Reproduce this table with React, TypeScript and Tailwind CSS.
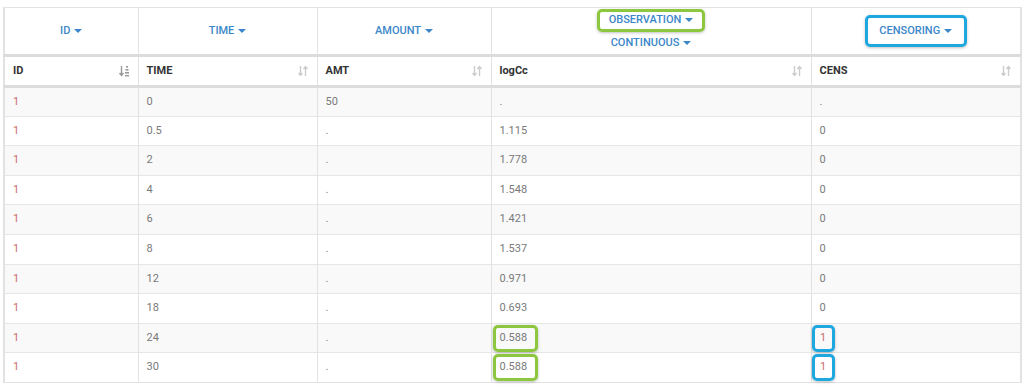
import React from 'react';

type Row = { id: string; time: string; amt: string; obs: string; cens: string; mark?: boolean };

const rows: Row[] = [
  { id: '1', time: '0', amt: '50', obs: '.', cens: '.' },
  { id: '1', time: '0.5', amt: '.', obs: '1.115', cens: '0' },
  { id: '1', time: '2', amt: '.', obs: '1.778', cens: '0' },
  { id: '1', time: '4', amt: '.', obs: '1.548', cens: '0' },
  { id: '1', time: '6', amt: '.', obs: '1.421', cens: '0' },
  { id: '1', time: '8', amt: '.', obs: '1.537', cens: '0' },
  { id: '1', time: '12', amt: '.', obs: '0.971', cens: '0' },
  { id: '1', time: '18', amt: '.', obs: '0.693', cens: '0' },
  { id: '1', time: '24', amt: '.', obs: '0.588', cens: '1', mark: true },
  { id: '1', time: '30', amt: '.', obs: '0.588', cens: '1', mark: true },
];

const Caret = () => (
  <span className="inline-block ml-[4px] align-middle w-0 h-0 border-l-[4px] border-r-[4px] border-t-[4px] border-l-transparent border-r-transparent border-t-[#3b87c9]" />
);

const SortIcon = () => (
  <svg width="12" height="12" viewBox="0 0 12 12" className="text-[#cccccc]">
    <path d="M3.5 1v9M1.5 8l2 2.5 2-2.5" stroke="currentColor" strokeWidth="1.4" fill="none" />
    <path d="M8.5 11V2M6.5 4l2-2.5 2 2.5" stroke="currentColor" strokeWidth="1.4" fill="none" />
  </svg>
);

const SortAscIcon = () => (
  <svg width="12" height="12" viewBox="0 0 12 12" className="text-[#9a9a9a]">
    <path d="M3.5 1v9M1.5 8l2 2.5 2-2.5" stroke="currentColor" strokeWidth="1.4" fill="none" />
    <rect x="8" y="1" width="2" height="1.6" fill="currentColor" />
    <rect x="7.5" y="4" width="3" height="1.6" fill="currentColor" />
    <rect x="7" y="7" width="4" height="1.6" fill="currentColor" />
    <rect x="7" y="10" width="4" height="1.4" fill="currentColor" />
  </svg>
);

const TopHead: React.FC<{ children: React.ReactNode; last?: boolean }> = ({ children, last }) => (
  <th className={`h-[48px] p-0 text-center align-middle font-medium text-[11px] text-[#3b87c9] uppercase ${last ? '' : 'border-r border-[#e2e2e2]'}`}>
    {children}
  </th>
);

const SubHead: React.FC<{ label: string; asc?: boolean; last?: boolean }> = ({ label, asc, last }) => (
  <th className={`h-[31px] pl-[8px] pr-[8px] text-left font-bold text-[11px] text-[#333] ${last ? '' : 'border-r border-[#e2e2e2]'}`}>
    <div className="flex items-center justify-between">
      <span>{label}</span>
      {asc ? <SortAscIcon /> : <SortIcon />}
    </div>
  </th>
);

const App: React.FC = () => {
  return (
    <div className="w-[1024px] h-[389px] bg-white pt-[7px] pl-[3px]" style={{ fontFamily: 'Roboto, "Liberation Sans", sans-serif' }}>
      <table className="w-[1017px] table-fixed border-collapse border-t border-l-2 border-r-2 border-b border-[#e2e2e2]">
        <colgroup>
          <col className="w-[134px]" />
          <col className="w-[179px]" />
          <col className="w-[174px]" />
          <col className="w-[320px]" />
          <col className="w-[210px]" />
        </colgroup>
        <thead>
          <tr className="border-b-[3px] border-[#dcdcdc]">
            <TopHead>ID<Caret /></TopHead>
            <TopHead>TIME<Caret /></TopHead>
            <TopHead>AMOUNT<Caret /></TopHead>
            <TopHead>
              <div className="flex flex-col items-center -mt-[1px]">
                <span className="inline-flex items-center h-[23px] px-[9px] border-[3px] border-[#8dc63f] rounded-[5px] shadow-[0_1px_3px_rgba(0,0,0,0.25)]">
                  OBSERVATION<Caret />
                </span>
                <span className="mt-[1px] leading-[20px]">CONTINUOUS<Caret /></span>
              </div>
            </TopHead>
            <TopHead last>
              <span className="inline-flex items-center justify-center w-[102px] h-[32px] border-[3px] border-[#1fa8e0] rounded-[5px] shadow-[0_1px_3px_rgba(0,0,0,0.25)]">
                CENSORING<Caret />
              </span>
            </TopHead>
          </tr>
          <tr className="border-b-[3px] border-[#dcdcdc]">
            <SubHead label="ID" asc />
            <SubHead label="TIME" />
            <SubHead label="AMT" />
            <SubHead label="logCc" />
            <SubHead label="CENS" last />
          </tr>
        </thead>
        <tbody>
          {rows.map((r, i) => (
            <tr key={i} className={`h-[29.6px] border-b border-[#e6e6e6] last:border-b-0 text-[11px] text-[#7a7a7a] ${i % 2 === 0 ? 'bg-[#f9f9f9]' : 'bg-white'}`}>
              <td className="px-[8px] border-r border-[#e2e2e2] text-[#c96e6c]">{r.id}</td>
              <td className="px-[8px] border-r border-[#e2e2e2]">{r.time}</td>
              <td className="px-[8px] border-r border-[#e2e2e2]">{r.amt}</td>
              {r.mark ? (
                <td className="pl-[1px] border-r border-[#e2e2e2]">
                  <span className="inline-flex items-center w-[45px] h-[27px] pl-[4px] border-[3px] border-[#8dc63f] rounded-[5px] shadow-[0_1px_3px_rgba(0,0,0,0.25)]">
                    {r.obs}
                  </span>
                </td>
              ) : (
                <td className="px-[8px] border-r border-[#e2e2e2]">{r.obs}</td>
              )}
              {r.mark ? (
                <td className="pl-0">
                  <span className="inline-flex items-center justify-center w-[23px] h-[27px] border-[3px] border-[#1fa8e0] rounded-[5px] shadow-[0_1px_3px_rgba(0,0,0,0.25)] text-[#c96e6c]">
                    {r.cens}
                  </span>
                </td>
              ) : (
                <td className="px-[8px]">{r.cens}</td>
              )}
            </tr>
          ))}
        </tbody>
      </table>
    </div>
  );
};

export default App;
